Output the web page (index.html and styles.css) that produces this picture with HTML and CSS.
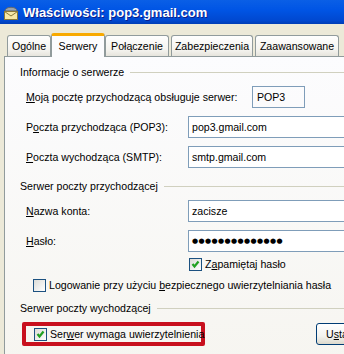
FILE: index.html
```html
<!DOCTYPE html>
<html lang="pl">
<head>
    <meta charset="UTF-8">
    <title>Właściwości: pop3.gmail.com</title>
    <link rel="stylesheet" href="styles.css">
</head>
<body>
    <div class="window">
        <div class="titlebar">
            <svg class="title-icon" width="18" height="18" viewBox="0 0 18 18">
                <path d="M3 8 C3 3 15 3 15 8 Z" fill="#9aa3ac" stroke="#5d6670" stroke-width="1"/>
                <rect x="2.5" y="8.5" width="13" height="8" fill="#f7e9a8" stroke="#8a7a3a"/>
                <path d="M2.5 8.5 L9 13 L15.5 8.5" fill="none" stroke="#8a7a3a"/>
            </svg>
            <span class="title">Właściwości: pop3.gmail.com</span>
        </div>

        <div class="tabs">
            <div class="tab tab-general">Ogólne</div>
            <div class="tab tab-servers active">Serwery</div>
            <div class="tab tab-connection">Połączenie</div>
            <div class="tab tab-security">Zabezpieczenia</div>
            <div class="tab tab-advanced">Zaawansowane</div>
        </div>

        <div class="panel">
            <div class="group first"><span>Informacje o serwerze</span></div>
            <div class="row">
                <label class="label wide"><u>M</u>oją pocztę przychodzącą obsługuje serwer:</label>
                <div class="static">POP3</div>
            </div>
            <div class="row">
                <label class="label">P<u>o</u>czta przychodząca (POP3):</label>
                <div class="field">pop3.gmail.com</div>
            </div>
            <div class="row">
                <label class="label"><u>P</u>oczta wychodząca (SMTP):</label>
                <div class="field">smtp.gmail.com</div>
            </div>

            <div class="group second"><span>Serwer poczty przychodzącej</span></div>
            <div class="row">
                <label class="label"><u>N</u>azwa konta:</label>
                <div class="field">zacisze</div>
            </div>
            <div class="row">
                <label class="label"><u>H</u>asło:</label>
                <div class="field password">●●●●●●●●●●●●●●</div>
            </div>
            <div class="check-row remember">
                <span class="checkbox checked"></span>
                <span>Z<u>a</u>pamiętaj hasło</span>
            </div>
            <div class="check-row secure">
                <span class="checkbox"></span>
                <span>Logowanie przy użyciu <u>b</u>ezpiecznego uwierzytelniania hasła</span>
            </div>

            <div class="group third"><span>Serwer poczty wychodzącej</span></div>
            <div class="bottom-row">
                <div class="highlight">
                    <span class="checkbox checked"></span>
                    <span>Ser<u>w</u>er wymaga uwierzytelnienia</span>
                </div>
                <button class="xp-button">U<u>s</u>tawienia...</button>
            </div>
        </div>
    </div>
</body>
</html>
```

FILE: styles.css
```css
body {
    margin: 0;
    font-family: "Liberation Sans", Arial, sans-serif;
    font-size: 10.6px;
    color: #000;
}
.window {
    width: 344px;
    height: 354px;
    overflow: hidden;
    background-color: #ece9d8;
}
.titlebar {
    height: 24px;
    display: flex;
    align-items: center;
    padding-left: 2px;
    background: linear-gradient(#0a5fe6, #0055e5 40%, #0048d0 85%, #003db5);
}
.title-icon {
    margin-right: 3px;
}
.title {
    color: white;
    font-weight: bold;
    font-size: 13px;
    text-shadow: 1px 1px 0 #0a1e8c;
}
.tabs {
    display: flex;
    align-items: flex-end;
    height: 32px;
    padding-left: 7px;
}
.tab {
    box-sizing: border-box;
    height: 21px;
    line-height: 20px;
    text-align: center;
    white-space: nowrap;
    margin-right: 2px;
    border: 1px solid #919b9c;
    border-bottom: none;
    border-radius: 3px 3px 0 0;
    background: linear-gradient(#fefefe, #f4f3ee 70%, #e6e4dc);
}
.tab-general { width: 44px; }
.tab-servers { width: 54px; }
.tab-connection { width: 64px; }
.tab-security { width: 82px; }
.tab-advanced { width: 84px; }
.tab.active {
    height: 24px;
    line-height: 20px;
    margin: 0 0 -1px -2px;
    border-top: 3px solid #f8a900;
    background: #fcfcfe;
    position: relative;
    z-index: 1;
}
.panel {
    margin-left: 4px;
    height: 310px;
    border-top: 1px solid #919b9c;
    border-left: 1px solid #919b9c;
    padding-left: 15px;
    background: linear-gradient(#fcfcfe, #f6f5f0);
}
.group {
    display: flex;
    align-items: center;
    height: 14px;
}
.group::after {
    content: "";
    flex: 1;
    height: 1px;
    margin-left: 6px;
    background-color: #d0d0bf;
}
.group.first {
    margin-top: 8px;
}
.group.second {
    margin-top: 11px;
}
.group.third {
    margin-top: 9px;
}
.row {
    display: flex;
    align-items: center;
    height: 22px;
    margin-top: 8px;
    padding-left: 6px;
}
.group + .row {
    margin-top: 7px;
}
.label {
    width: 162px;
    flex: none;
}
.label.wide {
    width: 226px;
}
.static {
    width: 47px;
    height: 20px;
    line-height: 20px;
    padding-left: 4px;
    border: 1px solid #7f9db9;
}
.field {
    width: 170px;
    flex: none;
    height: 20px;
    line-height: 20px;
    padding-left: 3px;
    border: 1px solid #7f9db9;
    background-color: white;
}
.password {
    font-family: "DejaVu Sans", sans-serif;
    font-size: 7px;
    letter-spacing: 0.4px;
}
.check-row {
    display: flex;
    align-items: center;
    height: 14px;
    white-space: nowrap;
}
.check-row.remember {
    margin-top: 5px;
    padding-left: 169px;
}
.check-row.secure {
    margin-top: 7px;
    padding-left: 13px;
}
.checkbox {
    width: 11px;
    height: 11px;
    margin-right: 3px;
    border: 1px solid #1c5180;
    background: linear-gradient(135deg, #dcdcd7, #fff);
    flex: none;
}
.checkbox.checked {
    background: url("data:image/svg+xml;utf8,<svg xmlns='http://www.w3.org/2000/svg' width='11' height='11'><path d='M2.5 5 L4.5 7.5 L8.5 2.5' fill='none' stroke='%2321a121' stroke-width='2.2'/></svg>") no-repeat, linear-gradient(135deg, #dcdcd7, #fff);
}
.bottom-row {
    display: flex;
    align-items: center;
    margin-top: 7px;
}
.highlight {
    display: flex;
    align-items: center;
    white-space: nowrap;
    width: 167px;
    height: 16px;
    padding-left: 8px;
    margin-left: 2px;
    border: 4px solid #c8101e;
    border-radius: 2px;
    flex: none;
}
.xp-button {
    margin-left: 111px;
    width: 80px;
    height: 22px;
    padding: 0 0 0 9px;
    text-align: left;
    white-space: nowrap;
    font: inherit;
    border: 1px solid #003c74;
    border-radius: 3px;
    background: linear-gradient(#ffffff, #f3f3ef 60%, #dcd9cc);
    flex: none;
}
```
